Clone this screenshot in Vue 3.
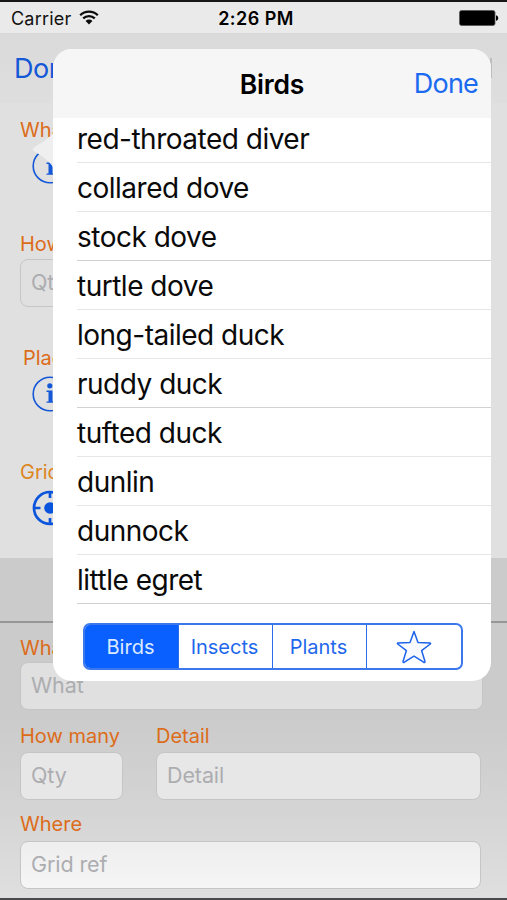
<script setup>
import { ref } from 'vue'

const birds = [
  'red-throated diver', 'collared dove', 'stock dove', 'turtle dove', 'long-tailed duck',
  'ruddy duck', 'tufted duck', 'dunlin', 'dunnock', 'little egret',
]
const tabs = ['Birds', 'Insects', 'Plants']
const active = ref('Birds')
</script>

<template>
  <div class="screen">
    <header class="status">
      <div class="carrier">
        <span>Carrier</span>
        <svg width="20" height="16" viewBox="0 0 20 16">
          <path d="M1.2 5.2a12.6 12.6 0 0 1 17.6 0M4.2 8.4a8.3 8.3 0 0 1 11.6 0" fill="none" stroke="#0b0b0b" stroke-width="2.3" />
          <path d="M6.6 11a4.8 4.8 0 0 1 6.8 0L10 14.6z" fill="#0b0b0b" />
        </svg>
      </div>
      <span class="time">2:26 PM</span>
      <svg class="battery" width="40" height="16" viewBox="0 0 40 16">
        <rect x="0.5" y="0.5" width="35.5" height="15" rx="2" fill="#000" stroke="#555" stroke-width="0.8" />
        <path d="M37 5.2c3 .8 3 4.8 0 5.6z" fill="#000" />
      </svg>
    </header>
    <nav class="nav"><span>Done</span><i class="edge"></i></nav>

    <main class="details">
      <div class="group what">
        <label>What</label>
        <svg class="icon" width="36" height="36" viewBox="0 0 36 36">
          <circle cx="18" cy="18" r="16.8" fill="none" stroke="#1458d8" stroke-width="1.6" />
          <path d="M14.5 14.5h6v11h2v1.3h-8v-1.3h2v-9.6h-2z" fill="#1458d8" />
          <circle cx="17.8" cy="9.8" r="2.6" fill="#1458d8" />
        </svg>
      </div>
      <div class="group many">
        <label>How many</label>
        <div class="field">Qty</div>
      </div>
      <div class="group place">
        <label>Place</label>
        <svg class="icon" width="36" height="36" viewBox="0 0 36 36">
          <circle cx="18" cy="18" r="16.8" fill="none" stroke="#1458d8" stroke-width="1.6" />
          <path d="M14.5 14.5h6v11h2v1.3h-8v-1.3h2v-9.6h-2z" fill="#1458d8" />
          <circle cx="17.8" cy="9.8" r="2.6" fill="#1458d8" />
        </svg>
      </div>
      <div class="group grid">
        <label>Grid ref</label>
        <svg class="icon" width="36" height="36" viewBox="0 0 36 36">
          <circle cx="18" cy="18" r="16" fill="none" stroke="#0b55dc" stroke-width="2.7" />
          <path d="M18 1v7M18 28v7M1 18h7.5M28 18h7" stroke="#0b55dc" stroke-width="2.7" />
          <circle cx="18" cy="18" r="5.8" fill="#0b55dc" />
        </svg>
      </div>
    </main>

    <div class="toolbar"></div>

    <section class="form">
      <div class="cell">
        <label class="cut">What</label>
        <div class="field first">What</div>
      </div>
      <div class="pair">
        <div class="cell qty">
          <label>How many</label>
          <div class="field second">Qty</div>
        </div>
        <div class="cell grow">
          <label>Detail</label>
          <div class="field second">Detail</div>
        </div>
      </div>
      <div class="cell last">
        <label>Where</label>
        <div class="field third">Grid ref</div>
      </div>
    </section>

    <svg class="arrow" width="22" height="38" viewBox="0 0 22 38">
      <path d="M22 0C19 7 10 11 2.5 16.2Q-.5 18 2 20C9 25 17 28 22 38z" fill="#efefef" />
    </svg>
    <div class="popover">
      <div class="head">
        <span></span>
        <h1>Birds</h1>
        <span class="done">Done</span>
      </div>
      <ul>
        <li v-for="bird in birds" :key="bird">{{ bird }}</li>
      </ul>
      <div class="tabs">
        <div v-for="tab in tabs" :key="tab" class="tab" :class="{ active: tab === active }" @click="active = tab">{{ tab }}</div>
        <div class="tab">
          <svg width="36" height="34" viewBox="0 0 36 34">
            <path d="M18 1.4 22 12.6 34 12.9Q35 13.2 34.3 14L25.6 20.6 29 31.4Q29 32.8 27.6 32.2L18 26.2 8.4 32.2Q7 32.8 7 31.4L10.4 20.6 1.7 14Q1 13.2 2 12.9L14 12.6Z" fill="#f8faff" stroke="#1c63ea" stroke-width="1.5" stroke-linejoin="round" />
          </svg>
        </div>
      </div>
    </div>
  </div>
</template>

<style>
body { margin: 0; }
</style>

<style scoped>
.screen {
  position: relative;
  box-sizing: border-box;
  width: 507px;
  height: 900px;
  overflow: hidden;
  display: flex;
  flex-direction: column;
  border-top: 2px solid #17171a;
  border-bottom: 2px solid #4a4a4c;
  background: #e0e0e0;
  font-family: Inter, "Liberation Sans", sans-serif;
  white-space: nowrap;
}
.status {
  height: 31px;
  display: grid;
  grid-template-columns: 1fr auto 1fr;
  align-items: center;
  padding: 0 8px 0 11px;
  background: #eaeaea;
  color: #111;
  font-size: 18px;
}
.carrier { display: flex; align-items: center; gap: 8px; letter-spacing: 0.2px; }
.carrier span, .time { position: relative; top: 1px; }
.time { font-weight: 600; color: #000; letter-spacing: 0.45px; left: 1px; }
.battery { justify-self: end; }
.nav {
  height: 70px;
  display: flex;
  align-items: center;
  justify-content: space-between;
  padding: 0 15px 0 14px;
  background: linear-gradient(#dadada, #dedede);
  color: #1458d8;
  font-size: 27px;
  letter-spacing: -0.5px;
}
.nav span { width: 39px; overflow: hidden; }
.edge { width: 2px; height: 20px; background: #bdbdbd; }
.details { height: 455px; display: flex; flex-direction: column; padding: 15px 0 0 20px; box-sizing: border-box; }
.group { height: 114px; flex: none; width: 33px; overflow: hidden; }
.place label { padding-left: 3px; }
label { display: block; height: 24px; line-height: 25px; font-size: 20px; color: #dd6c1a; }
.cut { width: 33px; overflow: hidden; }
.grid label { color: #dd851f; }
.icon { display: block; margin: 6px 0 0 12px; }
.many .field { width: 103px; height: 48px; margin-top: 3px; background: transparent; border: 1.5px solid #c6c6c6; }
.toolbar { height: 63px; background: #cbcbcb; border-bottom: 2px solid #979797; }
.form {
  flex: 1;
  box-sizing: border-box;
  padding: 13px 26px 0 20px;
  background: linear-gradient(#cbcbcb 0%, #cbcbcb 35%, #d5d5d5 70%, #dfdfdf 100%);
}
.field {
  box-sizing: border-box;
  height: 48px;
  line-height: 45px;
  padding-left: 10px;
  border: 1px solid #c5c5c5;
  border-radius: 8px;
  color: #acadb0;
  font-size: 21.5px;
  letter-spacing: -0.1px;
}
.first { margin-top: 2px; margin-right: -2px; background: #e0e0e0; }
.second { margin-top: 4px; background: #e7e7e7; }
.third { margin-top: 5px; background: linear-gradient(#eeeeee, #f5f5f5); }
.pair { display: flex; gap: 33px; padding-top: 14px; }
.qty { width: 103px; }
.grow { flex: 1; }
.last { padding-top: 12px; }
.arrow { position: absolute; left: 32px; top: 129px; }
.popover {
  position: absolute;
  left: 53px;
  top: 47px;
  width: 438px;
  height: 632px;
  border-radius: 19px;
  overflow: hidden;
  background: #fff;
}
.head {
  height: 69px;
  display: grid;
  grid-template-columns: 1fr auto 1fr;
  align-items: center;
  padding: 0 13px;
  background: #f6f6f6;
  font-size: 27px;
}
h1 { margin: 0; font-size: 26.5px; font-weight: 600; letter-spacing: -0.2px; }
.done { justify-self: end; color: #1c6af0; letter-spacing: -0.8px; }
ul { margin: -4px 0 0; padding: 0 0 0 24px; list-style: none; }
li {
  box-sizing: border-box;
  height: 49px;
  line-height: 51px;
  border-bottom: 1px solid #e6e6e6;
  font-size: 28px;
  letter-spacing: -0.5px;
  color: #0a0a0a;
}
li:nth-child(3), li:nth-child(6), li:nth-child(10) { border-bottom-color: #d2d2d2; }
.tabs {
  box-sizing: border-box;
  display: grid;
  grid-template-columns: repeat(4, minmax(0, 1fr));
  width: 380px;
  height: 47px;
  margin: 19px 0 0 30px;
  border: 2px solid #3b78ee;
  border-radius: 7px;
  overflow: hidden;
}
.tab {
  box-sizing: border-box;
  display: flex;
  align-items: center;
  justify-content: center;
  padding-right: 2px;
  border-right: 1px solid #2a6cec;
  font-size: 20px;
  color: #1f68ec;
}
.tab:last-child { border-right: 0; padding-right: 0; }
.active { background: #0a60ff; color: #dceaff; }
</style>
